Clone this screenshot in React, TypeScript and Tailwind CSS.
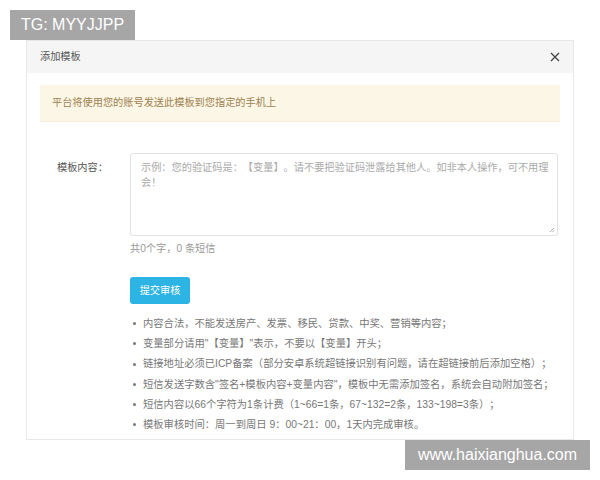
const font = { fontFamily: '"Liberation Sans", "Noto Sans CJK SC", sans-serif' };

const rules = [
  "内容合法，不能发送房产、发票、移民、贷款、中奖、营销等内容；",
  "变量部分请用\"【变量】\"表示，不要以【变量】开头；",
  "链接地址必须已ICP备案（部分安卓系统超链接识别有问题，请在超链接前后添加空格）；",
  "短信发送字数含\"签名+模板内容+变量内容\"，模板中无需添加签名，系统会自动附加签名；",
  "短信内容以66个字符为1条计费（1~66=1条，67~132=2条，133~198=3条）；",
  "模板审核时间：周一到周日 9：00~21：00，1天内完成审核。",
];

export default function App() {
  return (
    <div className="relative w-[600px] h-[480px] bg-white overflow-hidden [text-spacing-trim:space-all]" style={font}>
      {/* watermark top */}
      <div className="absolute left-[10px] top-[10px] h-[30px] w-[125px] bg-[#a6a6a6] text-white text-[16px] flex items-center justify-center z-10">
        TG: MYYJJPP
      </div>

      {/* modal */}
      <div className="ml-[26px] mt-[40px] w-[548px] h-[400px] border border-[#e8e8e8] flex flex-col">
        <div className="h-[32px] bg-[#f5f5f5] flex items-center justify-between pl-[13px] pr-[13px] shrink-0">
          <span className="text-[10.2px] text-[#555]">添加模板</span>
          <svg width="10" height="10" viewBox="0 0 10 10">
            <path d="M1 1L9 9M9 1L1 9" stroke="#444" strokeWidth="1.3" />
          </svg>
        </div>

        <div className="px-[13px] pt-[12px]">
          <div className="h-[37px] bg-[#fcf6e6] border-b border-[#f5ecd6] flex items-center pl-[12px] text-[10.2px] text-[#9c8150]">
            平台将使用您的账号发送此模板到您指定的手机上
          </div>

          <div className="flex mt-[31px]">
            <div className="w-[90px] pl-[17px] pt-[7px] text-[10.2px] text-[#555]">模板内容：</div>
            <div className="flex flex-col">
              <div className="relative w-[428px] h-[83px] border border-[#e2e2e2] rounded-[3px] pl-[10px] pr-[8px] pt-[6px] text-[10.2px] leading-[15px] text-[#aaa]">
                示例：您的验证码是：【变量】。请不要把验证码泄露给其他人。如非本人操作，可不用理会！
                <svg width="6" height="6" viewBox="0 0 6 6" className="absolute right-[2px] bottom-[2px]">
                  <path d="M1 5L5 1M3.5 5L5 3.5" stroke="#999" strokeWidth="0.8" />
                </svg>
              </div>
              <div className="mt-[5px] text-[10.2px] text-[#999]">共0个字，0 条短信</div>
              <button className="mt-[21px] w-[60px] h-[27px] rounded-[3px] bg-[#2cb4e4] text-white text-[10.2px]">
                提交审核
              </button>
            </div>
          </div>

          <ul className="mt-[9px] pl-[93px] flex flex-col">
            {rules.map((r) => (
              <li key={r} className="h-[20.3px] flex items-center whitespace-nowrap text-[10.3px] text-[#777]">
                <span className="w-[3px] h-[3px] rounded-full bg-[#777] mr-[7px] shrink-0" />
                {r}
              </li>
            ))}
          </ul>
        </div>
      </div>

      {/* watermark bottom */}
      <div className="absolute left-[405px] top-[440px] h-[30px] w-[185px] bg-[#a6a6a6] text-white text-[16px] flex items-center justify-center">
        www.haixianghua.com
      </div>
    </div>
  );
}
